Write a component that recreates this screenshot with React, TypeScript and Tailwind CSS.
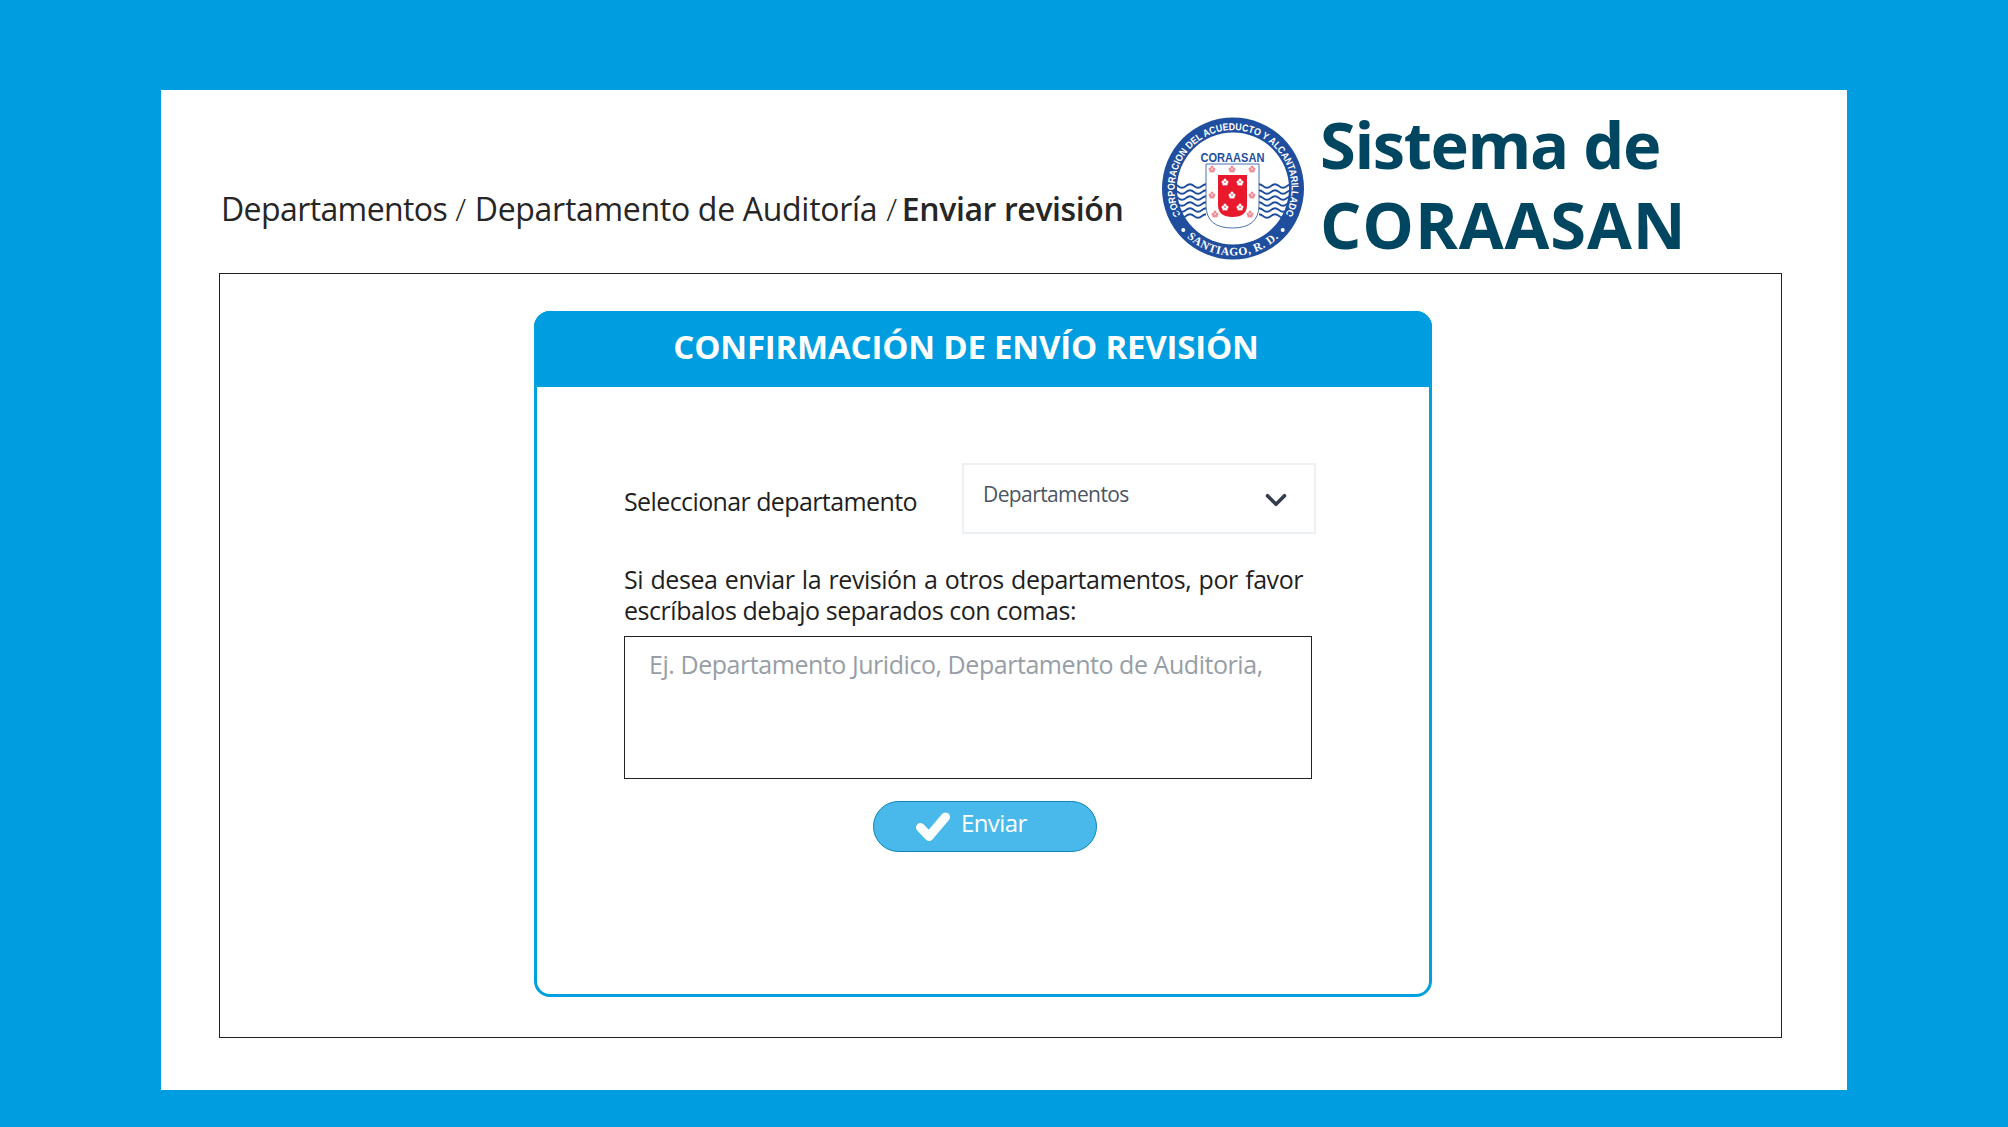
import React from "react";
import { ChevronDown } from "lucide-react";

const pinkDots = [
  [50, 52],
  [70, 52],
  [90, 52],
  [50, 78],
  [90, 78],
  [53, 97],
  [88, 97],
];
const whiteDots = [
  [63, 65],
  [78, 65],
  [70, 78],
  [63, 90],
  [78, 90],
];
const waveRows = [69, 75, 81, 87, 93, 99];

const Rosette = ({ x, y, color }: { x: number; y: number; color: string }) => (
  <g fill={color}>
    <circle cx={x} cy={y - 2} r="1.5" />
    <circle cx={x - 2} cy={y} r="1.5" />
    <circle cx={x + 2} cy={y} r="1.5" />
    <circle cx={x - 1.2} cy={y + 2} r="1.5" />
    <circle cx={x + 1.2} cy={y + 2} r="1.5" />
  </g>
);

const Logo = () => (
  <svg viewBox="0 0 142 143" className="w-[142px] h-[143px] shrink-0">
    <defs>
      <path id="topArc" d="M 20.3 100.8 A 58.5 58.5 0 1 1 121.7 100.8" />
      <path id="bottomArc" d="M 20 115 A 67 67 0 0 0 122 115" />
      <clipPath id="leftWave">
        <rect x="14" y="60" width="30" height="46" />
      </clipPath>
      <clipPath id="rightWave">
        <rect x="97" y="60" width="30" height="46" />
      </clipPath>
    </defs>
    <circle cx="71" cy="71.5" r="71" fill="#1f4e9e" />
    <circle cx="71" cy="71.5" r="56" fill="#ffffff" />
    <text fontFamily="'Liberation Sans', sans-serif" fontSize="10" fontWeight="700" fill="#ffffff">
      <textPath href="#topArc" startOffset="50%" textAnchor="middle" textLength="238" lengthAdjust="spacingAndGlyphs">
        CORPORACION DEL ACUEDUCTO Y ALCANTARILLADO
      </textPath>
    </text>
    <text fontFamily="'Liberation Serif', serif" fontSize="11.5" fontWeight="700" fill="#ffffff" letterSpacing="0.6">
      <textPath href="#bottomArc" startOffset="50%" textAnchor="middle">
        SANTIAGO, R. D.
      </textPath>
    </text>
    <circle cx="21.3" cy="113" r="2" fill="#ffffff" />
    <circle cx="120.7" cy="113" r="2" fill="#ffffff" />
    <g fill="none" stroke="#1f4e9e" strokeWidth="1.7">
      <g clipPath="url(#leftWave)">
        {waveRows.map((y) => (
          <path key={y} d={`M 8 ${y} q 4 -3.5 8 0 t 8 0 t 8 0 t 8 0 t 8 0`} />
        ))}
      </g>
      <g clipPath="url(#rightWave)">
        {waveRows.map((y) => (
          <path key={y} d={`M 93 ${y} q 4 -3.5 8 0 t 8 0 t 8 0 t 8 0 t 8 0`} />
        ))}
      </g>
    </g>
    <text x="70.5" y="45" textAnchor="middle" fontFamily="'Liberation Sans', sans-serif" fontSize="12" fontWeight="700" fill="#1f4e9e" textLength="64" lengthAdjust="spacingAndGlyphs">
      CORAASAN
    </text>
    <path d="M 44 47 H 97 V 88 Q 97 111 70.5 111 Q 44 111 44 88 Z" fill="#ffffff" stroke="#1f4e9e" strokeWidth="0.8" />
    <path d="M 56 58 H 85 V 88 Q 85 100 70.5 100 Q 56 100 56 88 Z" fill="#e8192c" />
    {pinkDots.map(([x, y]) => (
      <Rosette key={`${x}-${y}`} x={x} y={y} color="#ee8d98" />
    ))}
    {whiteDots.map(([x, y]) => (
      <Rosette key={`${x}-${y}`} x={x} y={y} color="#ffffff" />
    ))}
  </svg>
);

export default function App() {
  return (
    <div className="h-[1127px] bg-[#009ee0] pt-[90px] px-[161px] font-['Open_Sans','Noto_Sans',sans-serif] overflow-hidden">
      <div className="h-[1000px] bg-white pl-[58px] pr-[65px]">
        <div className="h-[183px] flex">
          <div className="w-[943px] pl-[2px] pt-[96px] text-[32px] leading-[46px] tracking-[-0.3px] text-[#262626] whitespace-nowrap">
            <span className="tracking-[-0.6px]">Departamentos</span>
            <span className="ml-[8px] mr-[9px] font-light">/</span>Departamento de Auditoría
            <span className="ml-[9px] mr-[5px] font-light">/</span>
            <span className="font-semibold tracking-[-0.4px]">Enviar revisión</span>
          </div>
          <div className="pt-[27px]">
            <Logo />
          </div>
          <div className="ml-[16px] pt-[14px] text-[65px] leading-[80px] font-bold tracking-[-1.4px] text-[#004660]">
            <p>Sistema de</p>
            <p className="tracking-[0.9px]">CORAASAN</p>
          </div>
        </div>
        <div className="h-[765px] border border-[#222222] pt-[37px] pl-[314px]">
          <div className="w-[898px] h-[686px] rounded-[16px] border-[3px] border-[#00a0e1] flex flex-col">
            <div className="h-[76px] -mt-[3px] -mx-[3px] rounded-t-[16px] bg-[#009ee0] pt-[14px] pr-[34px] text-center text-[33px] leading-[44px] font-bold tracking-[-0.2px] text-white">
              CONFIRMACIÓN DE ENVÍO REVISIÓN
            </div>
            <div className="pl-[87px] text-[25px] tracking-[-0.6px] text-[#1f1f1f]">
              <div className="mt-[76px] flex">
                <p className="w-[338px] pt-[21px] leading-[34px]">Seleccionar departamento</p>
                <div className="w-[354px] h-[71px] border-2 border-[#eef1f4] flex justify-between pl-[19px] pr-[21px]">
                  <span className="pt-[14px] text-[21px] leading-[30px] text-[#4b5563]">Departamentos</span>
                  <ChevronDown className="mt-[18px] w-[34px] h-[34px] text-[#333d4d]" strokeWidth={2.5} />
                </div>
              </div>
              <p className="mt-[30px] w-[679px] leading-[31px] tracking-[-0.45px] [text-align:justify]">
                Si desea enviar la revisión a otros departamentos, por favor escríbalos debajo separados con comas:
              </p>
              <textarea
                readOnly
                placeholder="Ej. Departamento Juridico, Departamento de Auditoria,"
                className="mt-[10px] block w-[688px] h-[143px] border border-[#222222] pl-[24px] pr-[8px] pt-[10px] leading-[34px] tracking-[-0.45px] resize-none outline-none placeholder:text-[#979ea6]"
              />
              <button className="mt-[22px] ml-[249px] w-[224px] h-[51px] rounded-full bg-[#48b9ea] border border-[#0b86b5] flex items-center pl-[42px] gap-[11px] text-white text-[24px] font-medium leading-none">
                <svg viewBox="0 0 34 30" className="w-[34px] h-[30px]">
                  <path d="M 4.5 15.5 L 13 24.5 L 29.5 5" fill="none" stroke="#ffffff" strokeWidth="9" strokeLinejoin="round" strokeLinecap="round" />
                </svg>
                <span className="-mt-[7px]">Enviar</span>
              </button>
            </div>
          </div>
        </div>
      </div>
    </div>
  );
}
